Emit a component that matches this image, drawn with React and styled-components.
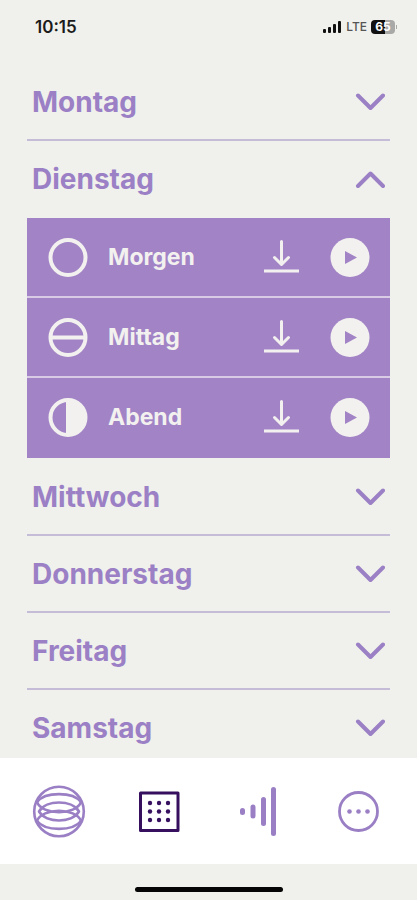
import { useState } from "react"
import styled, { createGlobalStyle } from "styled-components"

const GlobalStyle = createGlobalStyle`
    * {
        box-sizing: border-box;
    }
    body {
        margin: 0;
        background-color: #f0f1ec;
        font-family: Inter, "Liberation Sans", sans-serif;
    }
    button {
        margin: 0;
        padding: 0;
        border: 0;
        background: none;
        color: inherit;
        font: inherit;
        cursor: pointer;
    }
    svg {
        display: block;
        flex-shrink: 0;
    }
`

const Screen = styled.div`
    height: 100vh;
    display: flex;
    flex-direction: column;
    overflow: hidden;
`

const StatusBar = styled.header`
    height: 64px;
    flex-shrink: 0;
    display: flex;
    justify-content: space-between;
    align-items: flex-start;
    padding: 17px 20px 0 35px;
    color: #1b1b1b;
`

const Time = styled.span`
    font-size: 17px;
    font-weight: 600;
    line-height: 20px;
`

const StatusIcons = styled.div`
    display: flex;
    align-items: center;
    gap: 4px;
    height: 20px;
`

const Network = styled.span`
    font-size: 12px;
    font-weight: 500;
    line-height: 20px;
    color: #555;
`

const BatteryWrap = styled.span`
    display: flex;
    align-items: center;
    gap: 1px;
`

const Battery = styled.span`
    width: 24px;
    height: 14px;
    border-radius: 4px;
    background: linear-gradient(to right, #111 60%, #a9a9a7 60%);
    color: #fff;
    font-size: 12px;
    font-weight: 700;
    line-height: 14px;
    text-align: center;
`

const BatteryTip = styled.span`
    width: 1px;
    height: 4px;
    background-color: #a9a9a7;
`

const DayList = styled.main`
    flex: 1;
    min-height: 0;
    overflow-y: auto;
    scrollbar-width: none;
    padding: 0 27px;
`

const DayTitle = styled.span`
    font-size: 28px;
    font-weight: 700;
    line-height: 32px;
`

const DayButton = styled.button`
    width: 100%;
    height: 77px;
    display: flex;
    align-items: center;
    justify-content: space-between;
    padding: 0 5px;
    border-bottom: 2px solid ${({ $open }) => ($open ? "transparent" : "#c5bcd8")};
    color: #9b80c6;
    text-align: left;
`

const Tracks = styled.ul`
    margin: 0 0 1px;
    padding: 0;
    list-style: none;
    background-color: #a183c6;
    color: #f3f1ef;
`

const Track = styled.li`
    height: 80px;
    display: flex;
    align-items: center;
    padding: 0 20px 0 21px;
    border-bottom: 2px solid #d9cae6;

    &:last-child {
        border-bottom-color: transparent;
    }
`

const TrackName = styled.span`
    flex: 1;
    padding-left: 20px;
    font-size: 23px;
    font-weight: 700;
    line-height: 28px;
`

const TrackActions = styled.div`
    display: flex;
    gap: 30px;
`

const TabBar = styled.nav`
    height: 106px;
    flex-shrink: 0;
    display: grid;
    grid-template-columns: repeat(4, 1fr);
    padding: 0 9px;
    background-color: #fff;
`

const Tab = styled.button`
    display: flex;
    align-items: center;
    justify-content: center;
    color: ${({ $active }) => ($active ? "#36105f" : "#9a7fc5")};
`

const HomeArea = styled.footer`
    height: 36px;
    flex-shrink: 0;
    display: flex;
    justify-content: center;
    align-items: flex-end;
    padding-bottom: 8px;
`

const HomeBar = styled.div`
    width: 148px;
    height: 5px;
    border-radius: 3px;
    background-color: #050505;
`

const Chevron = ({ up }) => (
    <svg width="30" height="20" viewBox="0 0 30 20" fill="none" stroke="currentColor" strokeWidth="4" strokeLinecap="round" strokeLinejoin="round">
        <path d={up ? "M3 17 15.5 4.5 28 17" : "M3 3.5 15.5 16 28 3.5"} />
    </svg>
)

const PhaseIcon = ({ phase }) => (
    <svg width="40" height="40" viewBox="0 0 40 40" fill="none" stroke="currentColor" strokeWidth="4">
        <circle cx="20" cy="20.5" r="17.5" />
        {phase === "noon" && <path d="M3 20.5h34" />}
        {phase === "evening" && <path d="M18 3h2a17.5 17.5 0 0 1 0 35h-2z" fill="currentColor" stroke="none" />}
    </svg>
)

const DownloadIcon = () => (
    <svg width="36" height="40" viewBox="0 0 36 40" fill="none" stroke="currentColor" strokeWidth="3" strokeLinecap="round" strokeLinejoin="round">
        <path d="M17.5 4.5V27M10.5 20.5l7 7 7-7" />
        <path d="M0 34h35" strokeLinecap="butt" />
    </svg>
)

const PlayIcon = () => (
    <svg width="40" height="40" viewBox="0 0 40 40">
        <circle cx="20" cy="20.5" r="19.5" fill="currentColor" />
        <path d="M15 14v13l12-6.5z" fill="#a183c6" />
    </svg>
)

const SphereIcon = () => (
    <svg width="54" height="54" viewBox="0 0 54 54" fill="none" stroke="currentColor" strokeWidth="2.6">
        <circle cx="27" cy="27.5" r="24.8" />
        <path d="M5 18C13 7.5 41 7.5 49 18M5 37C13 47.5 41 47.5 49 37" />
        <path d="M5 18C10 31.5 44 31.5 49 18M5 37C10 23.5 44 23.5 49 37" />
        <path d="M7 27.5C14 15.5 40 15.5 47 27.5C40 39.5 14 39.5 7 27.5Z" strokeLinejoin="round" />
    </svg>
)

const CalendarIcon = () => (
    <svg width="42" height="42" viewBox="0 0 42 42" fill="none" stroke="currentColor">
        <rect x="2.5" y="3" width="37.5" height="37.5" strokeWidth="3" strokeLinejoin="round" />
        <g fill="currentColor" stroke="none">
            {[13, 21.5, 30].map((y) => [12, 21, 30].map((x) => (
                <circle key={`${x}-${y}`} cx={x} cy={y} r="2.2" />
            )))}
        </g>
    </svg>
)

const SoundIcon = () => (
    <svg width="38" height="50" viewBox="0 0 38 50" fill="none" stroke="currentColor" strokeWidth="5" strokeLinecap="round">
        <path d="M3.5 24.5v2M14 21v9M24.5 13.5v24M34.5 3.5v44" />
    </svg>
)

const MoreIcon = () => (
    <svg width="42" height="42" viewBox="0 0 42 42" fill="currentColor">
        <circle cx="21.5" cy="21.5" r="19" fill="none" stroke="currentColor" strokeWidth="2.8" />
        <circle cx="12.5" cy="21.5" r="2.3" />
        <circle cx="21.5" cy="21.5" r="2.3" />
        <circle cx="30.5" cy="21.5" r="2.3" />
    </svg>
)

const SignalIcon = () => (
    <svg width="19" height="12" viewBox="0 0 19 12" fill="#111">
        <rect x="0" y="8" width="3" height="4" rx="1" />
        <rect x="5" y="6" width="3" height="6" rx="1" />
        <rect x="10" y="3" width="3" height="9" rx="1" />
        <rect x="15" y="0" width="3" height="12" rx="1" />
    </svg>
)

const days = ["Montag", "Dienstag", "Mittwoch", "Donnerstag", "Freitag", "Samstag"]

const tracks = [
    { name: "Morgen", phase: "morning" },
    { name: "Mittag", phase: "noon" },
    { name: "Abend", phase: "evening" },
]

const tabs = [
    { id: "home", label: "Start", Icon: SphereIcon },
    { id: "week", label: "Woche", Icon: CalendarIcon },
    { id: "sound", label: "Klang", Icon: SoundIcon },
    { id: "more", label: "Mehr", Icon: MoreIcon },
]

const Day = ({ name, open, onToggle }) => {
    return <section>
        <DayButton $open={open} aria-expanded={open} onClick={onToggle}>
            <DayTitle>{name}</DayTitle>
            <Chevron up={open} />
        </DayButton>
        {open && (
            <Tracks>
                {tracks.map((track) => (
                    <Track key={track.name}>
                        <PhaseIcon phase={track.phase} />
                        <TrackName>{track.name}</TrackName>
                        <TrackActions>
                            <button aria-label={`${track.name} herunterladen`}><DownloadIcon /></button>
                            <button aria-label={`${track.name} abspielen`}><PlayIcon /></button>
                        </TrackActions>
                    </Track>
                ))}
            </Tracks>
        )}
    </section>
}

const App = () => {
    const [openDay, setOpenDay] = useState("Dienstag")
    const [activeTab, setActiveTab] = useState("week")

    return <>
        <GlobalStyle />
        <Screen>
            <StatusBar>
                <Time>10:15</Time>
                <StatusIcons>
                    <SignalIcon />
                    <Network>LTE</Network>
                    <BatteryWrap>
                        <Battery>65</Battery>
                        <BatteryTip />
                    </BatteryWrap>
                </StatusIcons>
            </StatusBar>
            <DayList>
                {days.map((day) => (
                    <Day
                        key={day}
                        name={day}
                        open={openDay === day}
                        onToggle={() => setOpenDay(openDay === day ? null : day)}
                    />
                ))}
            </DayList>
            <TabBar>
                {tabs.map(({ id, label, Icon }) => (
                    <Tab key={id} $active={activeTab === id} aria-label={label} onClick={() => setActiveTab(id)}>
                        <Icon />
                    </Tab>
                ))}
            </TabBar>
            <HomeArea>
                <HomeBar />
            </HomeArea>
        </Screen>
    </>
}

export default App
